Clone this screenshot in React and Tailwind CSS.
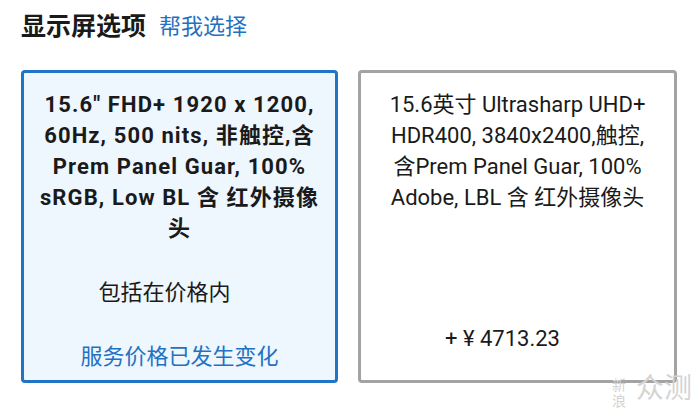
export default function App() {
  const font = { fontFamily: 'Roboto, "Noto Sans CJK SC", sans-serif' };
  return (
    <div className="relative w-[700px] h-[420px] bg-white overflow-hidden" style={font}>
      <div className="pl-[21px] flex items-center h-[53px] gap-[13px]">
        <span className="text-[25px] font-bold text-[#1a1a1a] leading-none">显示屏选项</span>
        <span className="text-[22px] text-[#1f72c2] leading-none">帮我选择</span>
      </div>
      <div className="flex gap-[20px] pl-[21px] mt-[17px]">
        <div className="w-[317px] h-[313px] rounded-[4px] border-[3px] border-[#1f74c6] bg-[#eef6fe] flex flex-col items-center">
          <div className="mt-[16px] text-center text-[22px] font-bold leading-[31px] tracking-[1.1px] text-[#1a1a1a] whitespace-nowrap">
            15.6" FHD+ 1920 x 1200,<br />60Hz, 500 nits, 非触控,含<br />Prem Panel Guar, 100%<br />sRGB, Low BL 含 红外摄像<br />头
          </div>
          <div className="mt-[33px] pr-[30px] text-[22px] leading-[31px] text-[#1a1a1a]">包括在价格内</div>
          <div className="mt-[33px] text-[22px] leading-[31px] text-[#1f72c2]">服务价格已发生变化</div>
        </div>
        <div className="w-[319px] h-[313px] rounded-[4px] border-[3px] border-[#a3a3a3] bg-white flex flex-col items-center">
          <div className="mt-[16px] text-center text-[22px] leading-[31px] text-[#1a1a1a] whitespace-nowrap">
            15.6英寸 Ultrasharp UHD+<br />HDR400, 3840x2400,触控,<br />含Prem Panel Guar, 100%<br />Adobe, LBL 含 红外摄像头
          </div>
          <div className="mt-[110px] pr-[30px] text-[22px] leading-[31px] text-[#1a1a1a]">+ ¥ 4713.23</div>
        </div>
      </div>
      <div className="absolute left-[612px] top-[375px] flex items-start gap-[10px] text-[#d4d4d4]">
        <div className="flex flex-col text-[14px] leading-[16px] mt-[2px]">
          <span>新</span>
          <span>浪</span>
        </div>
        <span className="text-[28px] leading-[28px]">众测</span>
      </div>
    </div>
  );
}
